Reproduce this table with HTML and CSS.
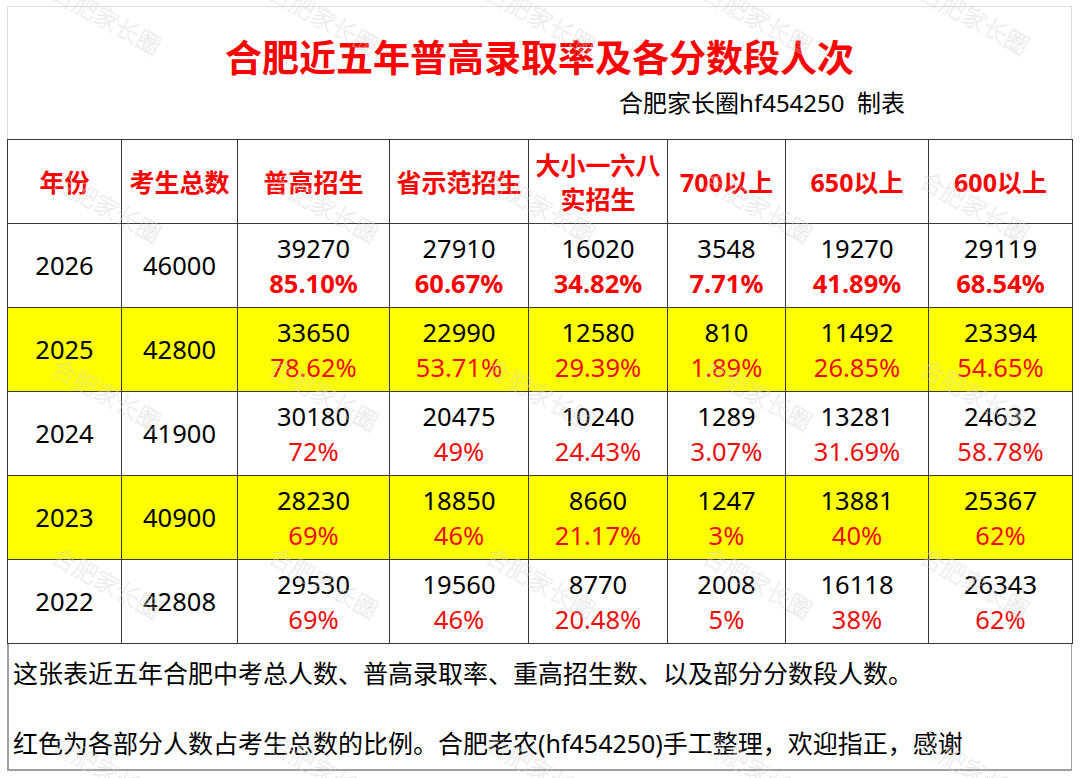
FILE: index.html
```html
<!DOCTYPE html>
<html lang="zh-CN">
<head>
<meta charset="utf-8">
<title>合肥近五年普高录取率及各分数段人次</title>
<link rel="stylesheet" href="styles.css">
</head>
<body>
<div class="sheet">
  <header class="title-block">
    <h1 class="title">合肥近五年普高录取率及各分数段人次</h1>
    <p class="subtitle">合肥家长圈hf454250&nbsp;&nbsp;制表</p>
  </header>
  <table class="data">
    <colgroup>
      <col class="c1"><col class="c2"><col class="c3"><col class="c4">
      <col class="c5"><col class="c6"><col class="c7"><col class="c8">
    </colgroup>
    <thead>
      <tr>
        <th>年份</th><th>考生总数</th><th>普高招生</th><th>省示范招生</th>
        <th class="two-line">大小一六八<br>实招生</th><th>700以上</th><th>650以上</th><th>600以上</th>
      </tr>
    </thead>
    <tbody>
      <tr class="first">
        <td>2026</td><td>46000</td>
        <td><span class="num">39270</span><span class="pct">85.10%</span></td>
        <td><span class="num">27910</span><span class="pct">60.67%</span></td>
        <td><span class="num">16020</span><span class="pct">34.82%</span></td>
        <td><span class="num">3548</span><span class="pct">7.71%</span></td>
        <td><span class="num">19270</span><span class="pct">41.89%</span></td>
        <td><span class="num">29119</span><span class="pct">68.54%</span></td>
      </tr>
      <tr class="hl">
        <td>2025</td><td>42800</td>
        <td><span class="num">33650</span><span class="pct">78.62%</span></td>
        <td><span class="num">22990</span><span class="pct">53.71%</span></td>
        <td><span class="num">12580</span><span class="pct">29.39%</span></td>
        <td><span class="num">810</span><span class="pct">1.89%</span></td>
        <td><span class="num">11492</span><span class="pct">26.85%</span></td>
        <td><span class="num">23394</span><span class="pct">54.65%</span></td>
      </tr>
      <tr>
        <td>2024</td><td>41900</td>
        <td><span class="num">30180</span><span class="pct">72%</span></td>
        <td><span class="num">20475</span><span class="pct">49%</span></td>
        <td><span class="num">10240</span><span class="pct">24.43%</span></td>
        <td><span class="num">1289</span><span class="pct">3.07%</span></td>
        <td><span class="num">13281</span><span class="pct">31.69%</span></td>
        <td><span class="num">24632</span><span class="pct">58.78%</span></td>
      </tr>
      <tr class="hl">
        <td>2023</td><td>40900</td>
        <td><span class="num">28230</span><span class="pct">69%</span></td>
        <td><span class="num">18850</span><span class="pct">46%</span></td>
        <td><span class="num">8660</span><span class="pct">21.17%</span></td>
        <td><span class="num">1247</span><span class="pct">3%</span></td>
        <td><span class="num">13881</span><span class="pct">40%</span></td>
        <td><span class="num">25367</span><span class="pct">62%</span></td>
      </tr>
      <tr>
        <td>2022</td><td>42808</td>
        <td><span class="num">29530</span><span class="pct">69%</span></td>
        <td><span class="num">19560</span><span class="pct">46%</span></td>
        <td><span class="num">8770</span><span class="pct">20.48%</span></td>
        <td><span class="num">2008</span><span class="pct">5%</span></td>
        <td><span class="num">16118</span><span class="pct">38%</span></td>
        <td><span class="num">26343</span><span class="pct">62%</span></td>
      </tr>
    </tbody>
  </table>
  <div class="notes">
    <p>这张表近五年合肥中考总人数、普高录取率、重高招生数、以及部分分数段人数。</p>
    <p>红色为各部分人数占考生总数的比例。合肥老农(hf454250)手工整理，欢迎指正，感谢</p>
  </div>
</div>
<div class="watermarks" aria-hidden="true">
  <div class="wm-grid">
    <span class="wm">合肥家长圈</span><span class="wm">合肥家长圈</span><span class="wm">合肥家长圈</span><span class="wm">合肥家长圈</span><span class="wm">合肥家长圈</span>
    <span class="wm">合肥家长圈</span><span class="wm">合肥家长圈</span><span class="wm">合肥家长圈</span><span class="wm">合肥家长圈</span><span class="wm">合肥家长圈</span>
    <span class="wm">合肥家长圈</span><span class="wm">合肥家长圈</span><span class="wm">合肥家长圈</span><span class="wm">合肥家长圈</span><span class="wm">合肥家长圈</span>
    <span class="wm">合肥家长圈</span><span class="wm">合肥家长圈</span><span class="wm">合肥家长圈</span><span class="wm">合肥家长圈</span><span class="wm">合肥家长圈</span>
    <span class="wm">合肥家长圈</span><span class="wm">合肥家长圈</span><span class="wm">合肥家长圈</span><span class="wm">合肥家长圈</span><span class="wm">合肥家长圈</span>
  </div>
</div>
</body>
</html>
```

FILE: styles.css
```css
html, body {
  margin: 0;
  padding: 0;
  background: #ffffff;
  overflow: hidden;
}

body {
  font-family: "Noto Sans", "Noto Sans CJK SC", sans-serif;
  color: #000;
}

.sheet {
  width: 1065px;
  margin: 6px 0 0 7px;
}

.title-block {
  box-sizing: border-box;
  height: 133px;
  border: 1px solid #dcdcdc;
  border-bottom: none;
  padding-top: 26px;
}

.title {
  margin: 0;
  text-align: center;
  font-family: "Noto Sans CJK SC", sans-serif;
  font-weight: 700;
  font-size: 37px;
  line-height: 46px;
  color: #ff0000;
}

.subtitle {
  margin: 9px 0 0;
  display: flex;
  justify-content: flex-end;
  padding-right: 166px;
  font-family: "Noto Sans", "Noto Sans CJK SC", sans-serif;
  font-size: 24px;
  line-height: 30px;
  color: #000;
}

.data {
  width: 1065px;
  table-layout: fixed;
  border-collapse: collapse;
}

.c1 { width: 114px; }
.c2 { width: 116px; }
.c3 { width: 152px; }
.c4 { width: 139px; }
.c5 { width: 139px; }
.c6 { width: 118px; }
.c7 { width: 143px; }
.c8 { width: 144px; }

.data th,
.data td {
  border: 1px solid #3a3a3a;
  padding: 0;
  height: 83px;
  text-align: center;
  vertical-align: middle;
}

.data th {
  font-family: "Noto Sans", "Noto Sans CJK SC", sans-serif;
  font-weight: 700;
  font-size: 25px;
  line-height: 34px;
  color: #ff0000;
}

.data td {
  font-size: 25.5px;
  line-height: 35px;
}

.num,
.pct {
  display: block;
}

.pct {
  color: #f20d0d;
}

.first .pct {
  font-weight: 700;
  color: #ff0000;
}

.hl td {
  background: #ffff00;
}

.notes {
  box-sizing: border-box;
  height: 127px;
  border-left: 2px solid #a0a0a0;
  border-right: 1px solid #a0a0a0;
  border-bottom: 2px solid #a0a0a0;
  padding: 12px 0 0 4px;
  font-family: "Noto Sans", "Noto Sans CJK SC", sans-serif;
  font-size: 25px;
  line-height: 34px;
}

.notes p {
  margin: 0 0 36px;
}

.watermarks {
  position: fixed;
  inset: 0;
  overflow: hidden;
  pointer-events: none;
}

.wm-grid {
  display: grid;
  grid-template-columns: repeat(5, 217px);
  grid-auto-rows: 188px;
  margin: -76px 0 0 -2px;
}

.wm {
  align-self: center;
  justify-self: center;
  font-family: "Noto Sans CJK SC", sans-serif;
  font-weight: 300;
  font-size: 24px;
  line-height: 1;
  white-space: nowrap;
  color: rgba(255, 255, 255, 0.45);
  -webkit-text-stroke: 0.5px rgba(0, 0, 0, 0.13);
  transform: rotate(29deg);
}
```
